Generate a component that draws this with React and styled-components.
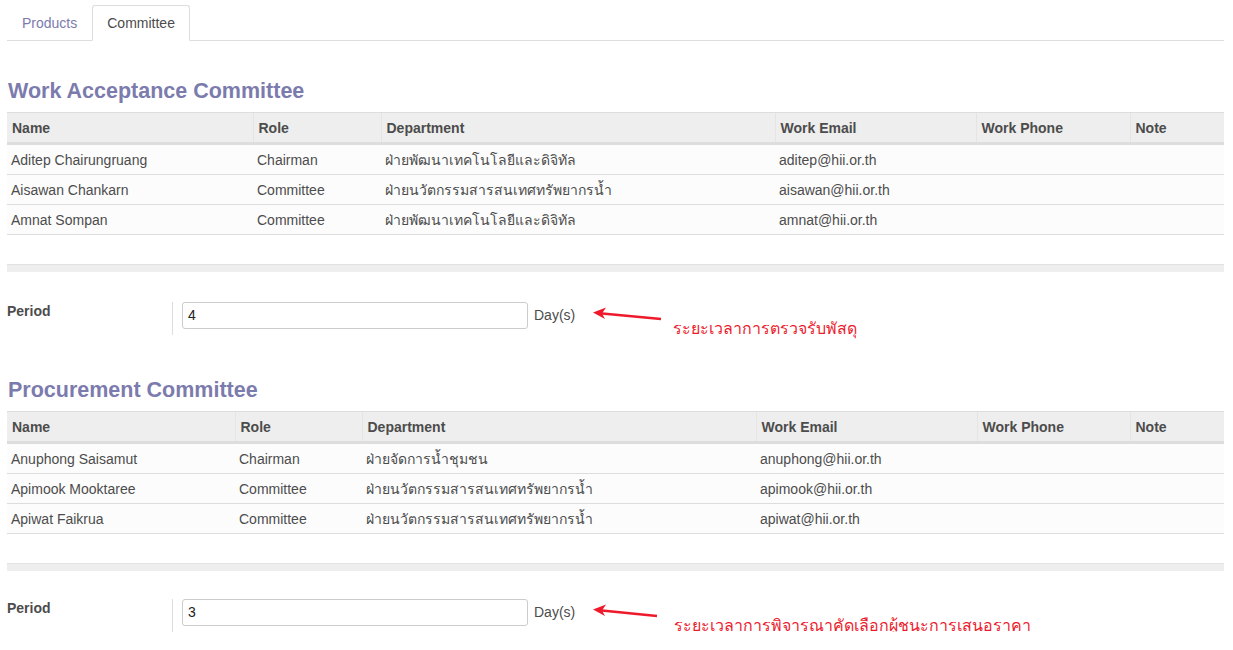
import React from 'react'
import styled, { createGlobalStyle } from 'styled-components'

const GlobalStyle = createGlobalStyle`
  body {
    margin: 0;
    background: #fff;
    font-family: "Liberation Sans", Arial, sans-serif;
    font-size: 14px;
    color: #4c4c4c;
  }
`

const Page = styled.div`
  padding: 5px 9px 0 7px;
`

const Tabs = styled.ul`
  display: flex;
  list-style: none;
  margin: 0;
  padding: 0;
  border-bottom: 1px solid #ddd;
  height: 35px;
`

const Tab = styled.li`
  display: flex;
  align-items: center;
  padding: 0 14px 1px 14px;
  margin-bottom: -1px;
  border: 1px solid ${p => (p.active ? '#ddd' : 'transparent')};
  border-bottom-color: ${p => (p.active ? '#fff' : 'transparent')};
  border-radius: 3px 3px 0 0;
  background: ${p => (p.active ? '#fff' : 'transparent')};
  color: ${p => (p.active ? '#4c4c4c' : '#7c7bad')};
`

const Section = styled.section`
  padding-top: ${p => (p.first ? '38px' : '43px')};
`

const Heading = styled.h2`
  margin: 0 0 9px 1px;
  font-size: 21.5px;
  font-weight: bold;
  color: #7c7bad;
  line-height: 24px;
`

const Table = styled.table`
  width: 100%;
  border-collapse: collapse;
  table-layout: fixed;
`

const Th = styled.th`
  text-align: left;
  font-weight: bold;
  background: #eee;
  height: 29px;
  padding: 0 5px;
  border-top: 1px solid #ddd;
  border-bottom: 3px solid #ddd;
  border-left: 1px solid #e4e4e4;
  &:first-child { border-left: none; }
`

const Td = styled.td`
  height: 29px;
  padding: 0 4px;
  background: #fcfcfc;
  border-bottom: 1px solid #ddd;
  white-space: nowrap;
  overflow: hidden;
`

const FooterBar = styled.div`
  margin-top: 29px;
  height: 7px;
  background: #eee;
  border-top: 1px solid #e2e2e2;
`

const FieldRow = styled.div`
  display: flex;
  align-items: flex-start;
  margin-top: ${p => p.gap}px;
`

const Label = styled.div`
  width: 165px;
  font-weight: bold;
  padding-top: 1px;
`

const FieldCell = styled.div`
  display: flex;
  align-items: flex-start;
  box-sizing: border-box;
  height: 33px;
  border-left: 1px solid #ddd;
  padding-left: 9px;
`

const Input = styled.div`
  box-sizing: border-box;
  width: 346px;
  height: 27px;
  border: 1px solid #ccc;
  border-radius: 3px;
  padding: 4px 5px 0;
  color: #222;
`

const Unit = styled.span`
  margin-left: 6px;
  line-height: 27px;
`

const Note = styled.span`
  margin-top: 14px;
  margin-left: ${p => p.offset}px;
  color: #ec1c2e;
  font-size: 16px;
  white-space: nowrap;
`

const Arrow = ({ width }) => (
  <svg width={width} height="22" viewBox={`0 0 ${width} 22`} style={{ marginLeft: 16, marginTop: 2 }}>
    <line x1="6" y1="9" x2={width - 2} y2="15" stroke="#ee1a2b" strokeWidth="2.5" />
    <path d="M2 8.5 L15 3.5 L11 9.5 L14 15 Z" fill="#ee1a2b" />
  </svg>
)

const Committee = ({ title, cols, rows, period, note, noteOffset, arrowWidth, first, gap }) => (
  <Section first={first}>
    <Heading>{title}</Heading>
    <Table>
      <colgroup>
        {cols.map((w, i) => <col key={i} style={{ width: w }} />)}
      </colgroup>
      <thead>
        <tr>
          {['Name', 'Role', 'Department', 'Work Email', 'Work Phone', 'Note'].map(h => (
            <Th key={h}>{h}</Th>
          ))}
        </tr>
      </thead>
      <tbody>
        {rows.map(r => (
          <tr key={r[0]}>
            <Td>{r[0]}</Td>
            <Td>{r[1]}</Td>
            <Td>{r[2]}</Td>
            <Td>{r[3]}</Td>
            <Td />
            <Td />
          </tr>
        ))}
      </tbody>
    </Table>
    <FooterBar />
    <FieldRow gap={gap}>
      <Label>Period</Label>
      <FieldCell>
        <Input>{period}</Input>
        <Unit>Day(s)</Unit>
        <Arrow width={arrowWidth} />
        <Note offset={noteOffset}>{note}</Note>
      </FieldCell>
    </FieldRow>
  </Section>
)

const App = () => (
  <Page>
    <GlobalStyle />
    <Tabs>
      <Tab>Products</Tab>
      <Tab active>Committee</Tab>
    </Tabs>
    <Committee
      first
      gap={30}
      title="Work Acceptance Committee"
      cols={[246, 128, 394, 201, 154]}
      rows={[
        ['Aditep Chairungruang', 'Chairman', 'ฝ่ายพัฒนาเทคโนโลยีและดิจิทัล', 'aditep@hii.or.th'],
        ['Aisawan Chankarn', 'Committee', 'ฝ่ายนวัตกรรมสารสนเทศทรัพยากรน้ำ', 'aisawan@hii.or.th'],
        ['Amnat Sompan', 'Committee', 'ฝ่ายพัฒนาเทคโนโลยีและดิจิทัล', 'amnat@hii.or.th'],
      ]}
      period="4"
      note="ระยะเวลาการตรวจรับพัสดุ"
      noteOffset={10}
      arrowWidth={72}
    />
    <Committee
      gap={28}
      title="Procurement Committee"
      cols={[228, 127, 394, 221, 153]}
      rows={[
        ['Anuphong Saisamut', 'Chairman', 'ฝ่ายจัดการน้ำชุมชน', 'anuphong@hii.or.th'],
        ['Apimook Mooktaree', 'Committee', 'ฝ่ายนวัตกรรมสารสนเทศทรัพยากรน้ำ', 'apimook@hii.or.th'],
        ['Apiwat Faikrua', 'Committee', 'ฝ่ายนวัตกรรมสารสนเทศทรัพยากรน้ำ', 'apiwat@hii.or.th'],
      ]}
      period="3"
      note="ระยะเวลาการพิจารณาคัดเลือกผู้ชนะการเสนอราคา"
      noteOffset={15}
      arrowWidth={68}
    />
  </Page>
)

export default App
